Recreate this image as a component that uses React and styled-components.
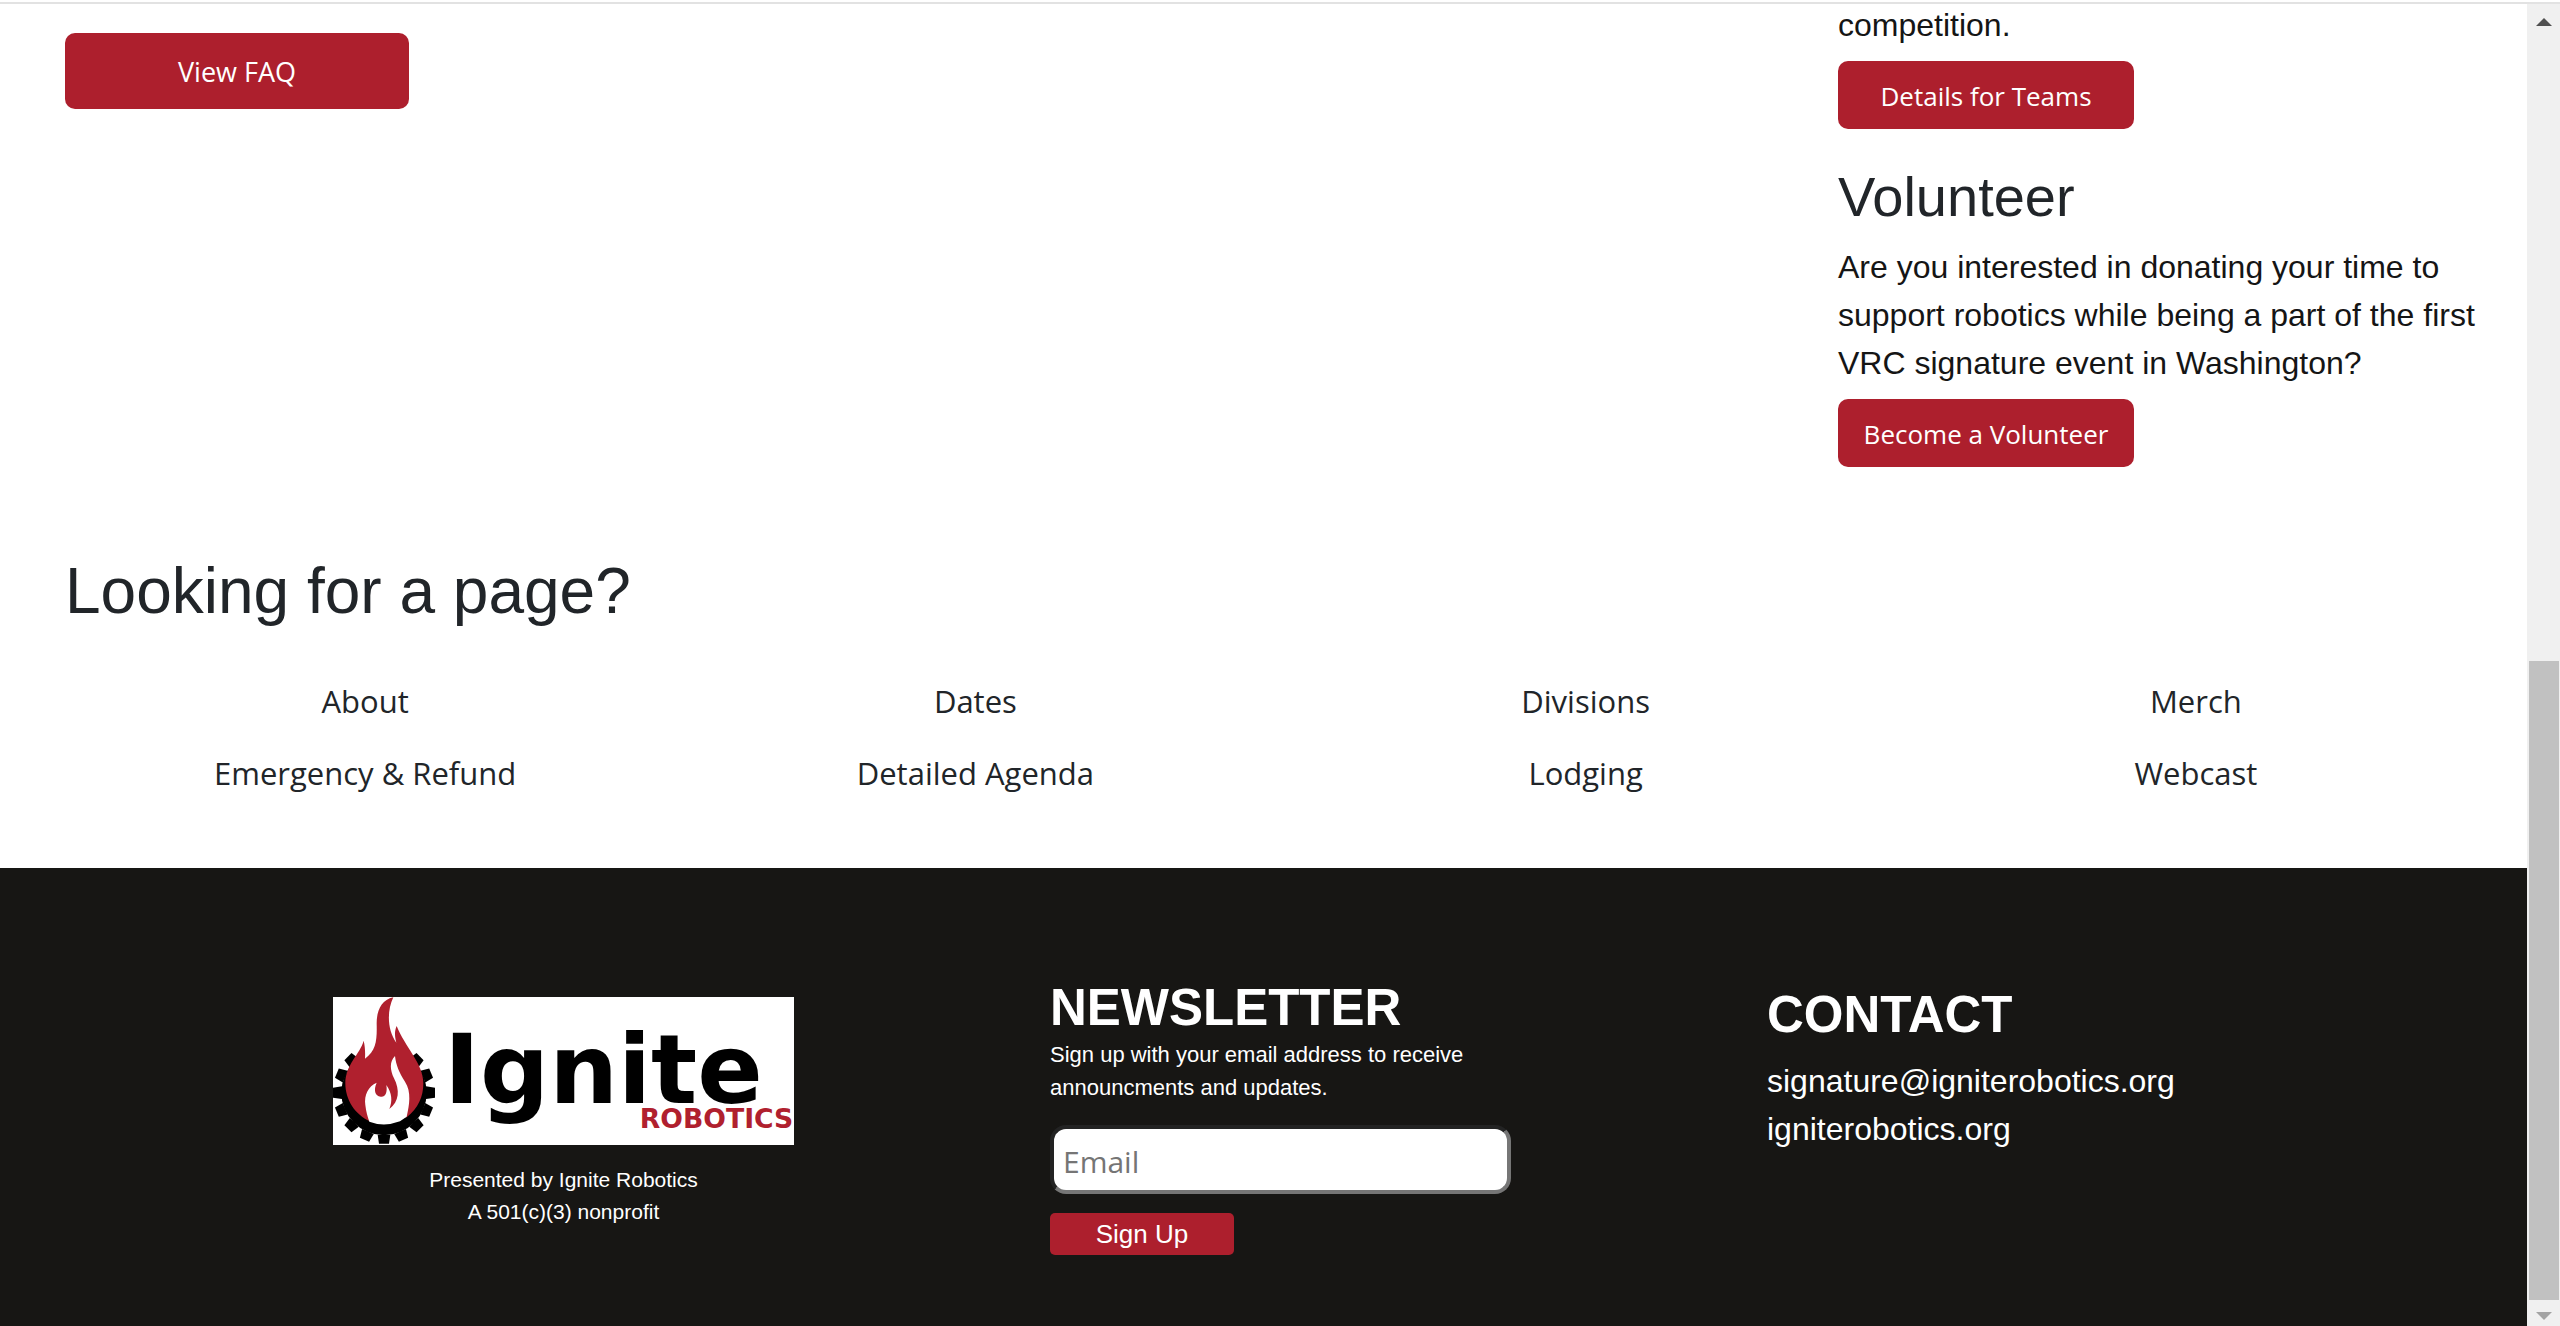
import React from "react";
import styled, { createGlobalStyle } from "styled-components";

const SANS = '"Liberation Sans", Arial, sans-serif';
const UI = '"Open Sans", "Segoe UI", sans-serif';
const RED = "#ad1f2d";

const GlobalStyle = createGlobalStyle`
  *, *::before, *::after { box-sizing: border-box; }
  body { margin: 0; background: #fff; color: #151515; font-family: ${SANS}; }
  h2, h3, p { margin: 0; }
`;

const TopRule = styled.div`
  position: fixed;
  top: 0;
  left: 0;
  right: 0;
  height: 4px;
  background: #fff;
  border-bottom: 2px solid #e2e2e2;
`;

const Shell = styled.div`
  display: grid;
  grid-template-columns: minmax(0, 1fr) 33px;
  min-height: 100vh;
`;

const Page = styled.div`
  display: flex;
  flex-direction: column;
`;

const Intro = styled.section`
  display: grid;
  grid-template-columns: 1fr 660px;
  align-items: start;
  padding: 0 29px 0 65px;
`;

const FaqArea = styled.div`
  padding-top: 33px;
`;

const Aside = styled.aside`
  display: flex;
  flex-direction: column;
  align-items: flex-start;
  gap: 12px;
  padding-top: 1px;
`;

const Text = styled.p`
  font-size: 32px;
  line-height: 48px;
`;

const Subheading = styled.h2`
  margin-top: 22px;
  color: #212529;
  font-size: 56px;
  font-weight: 400;
  line-height: 68px;
`;

const ActionButton = styled.button`
  width: ${(p) => (p.$large ? "344px" : "296px")};
  height: ${(p) => (p.$large ? "76px" : "68px")};
  padding: 2px 0 0;
  border: 0;
  border-radius: 10px;
  background: ${RED};
  color: #fff;
  font: 400 ${(p) => (p.$large ? "27px" : "26px")}/40px ${UI};
`;

const Directory = styled.section`
  padding: 86px 26px 71px 60px;
`;

const DirectoryTitle = styled.h2`
  padding-left: 5px;
  color: #212529;
  font-size: 64px;
  font-weight: 400;
  line-height: 77px;
`;

const LinkGrid = styled.nav`
  display: grid;
  grid-template-columns: repeat(4, 1fr);
  row-gap: 24px;
  margin-top: 47px;
  text-align: center;
`;

const PageLink = styled.a`
  color: #212529;
  font: 400 31px/48px ${UI};
  text-decoration: none;
`;

const Footer = styled.footer`
  flex: 1;
  display: grid;
  grid-template-columns: repeat(3, 1fr);
  align-items: start;
  column-gap: 256px;
  padding: 110px 299px 60px 333px;
  background: #171614;
  color: #fff;
`;

const Brand = styled.div`
  padding-top: 19px;
  text-align: center;
`;

const LogoArt = styled.svg`
  display: block;
  width: 100%;
  background: #fff;
`;

const Caption = styled.p`
  margin-top: 19px;
  font-size: 21px;
  line-height: 32px;
`;

const FooterTitle = styled.h3`
  font-size: 51px;
  font-weight: 700;
  line-height: 60px;
`;

const Form = styled.form`
  display: flex;
  flex-direction: column;
  align-items: flex-start;
`;

const FormNote = styled.label`
  font-size: 22px;
  line-height: 33px;
`;

const EmailInput = styled.input`
  width: 100%;
  height: 69px;
  margin: 21px 0 19px;
  padding: 3px 9px 0;
  border: 4px solid;
  border-color: #232323 #767676 #767676 #232323;
  border-radius: 16px;
  background: #fff;
  font: 400 30px/44px ${UI};
  &::placeholder { color: #757575; opacity: 1; }
`;

const SubmitButton = styled.button`
  width: 184px;
  height: 42px;
  padding: 0;
  border: 0;
  border-radius: 5px;
  background: ${RED};
  color: #fff;
  font: 400 26px/30px ${SANS};
`;

const Contact = styled.address`
  display: flex;
  flex-direction: column;
  align-items: flex-start;
  padding-top: 7px;
  font-style: normal;
`;

const ContactLinks = styled.div`
  display: flex;
  flex-direction: column;
  margin-top: 12px;
`;

const ContactLink = styled.a`
  color: #fff;
  font-size: 32px;
  line-height: 48px;
  text-decoration: none;
`;

const Track = styled.div`
  display: flex;
  flex-direction: column;
  padding: 4px 1px 0 2px;
  background: #f0f0f0;
`;

const ArrowBox = styled.div`
  display: flex;
  justify-content: center;
  align-items: ${(p) => (p.$end ? "flex-end" : "center")};
  height: ${(p) => (p.$end ? "26px" : "36px")};
  padding-bottom: ${(p) => (p.$end ? "6px" : "0")};
`;

const TrackSpace = styled.div`
  flex: 621;
`;

const Thumb = styled.div`
  flex: 639;
  background: #c1c1c1;
`;

const TEETH = Array.from({ length: 16 }, (_, i) => i * 22.5);

function Logo() {
  return (
    <LogoArt viewBox="39 51 1383 444" role="img" aria-label="Ignite Robotics">
      <circle cx="192" cy="338" r="128" />
      {TEETH.map((a) => (
        <path key={a} d="M173 464 L177 491 H207 L211 464 Z" transform={`rotate(${a} 192 338)`} />
      ))}
      <path fill="#fff" d="M192 338 L92 160 H292 Z" />
      <path
        fill="#b0202e"
        d="M220 52 C184 60 170 92 170 130 C171 178 170 212 135 236 C136 214 135 200 131 182 C120 222 76 254 76 310 C76 360 105 404 150 424 L260 412 C295 385 310 350 310 310 C310 250 254 200 230 138 C223 155 224 168 229 188 C202 150 200 94 220 52 Z"
      />
      <path
        fill="#fff"
        d="M225 228 C208 245 210 270 222 295 C240 330 238 365 208 387 C218 362 216 340 199 315 C203 340 195 352 182 350 C165 348 160 330 170 308 C145 318 132 345 136 375 C138 395 143 410 148 425 Q192 442 240 424 L260 410 C268 375 275 335 255 305 C237 277 228 255 225 228 Z"
      />
      <text x="372" y="368" fontFamily="DejaVu Sans" fontWeight="700" fontSize="290">Ignite</text>
      <text x="1420" y="444" textAnchor="end" fill="#b0202e" fontFamily="DejaVu Sans" fontWeight="700" fontSize="80">ROBOTICS</text>
    </LogoArt>
  );
}

const PAGES = [
  "About", "Dates", "Divisions", "Merch",
  "Emergency & Refund", "Detailed Agenda", "Lodging", "Webcast",
];

export default function App() {
  return (
    <>
      <GlobalStyle />
      <Shell>
        <Page>
          <Intro>
            <FaqArea>
              <ActionButton $large>View FAQ</ActionButton>
            </FaqArea>
            <Aside>
              <Text>competition.</Text>
              <ActionButton>Details for Teams</ActionButton>
              <Subheading>Volunteer</Subheading>
              <Text>
                Are you interested in donating your time to support robotics while being a part of the
                first VRC signature event in Washington?
              </Text>
              <ActionButton>Become a Volunteer</ActionButton>
            </Aside>
          </Intro>
          <Directory>
            <DirectoryTitle>Looking for a page?</DirectoryTitle>
            <LinkGrid>
              {PAGES.map((name) => (
                <PageLink key={name} href="#">{name}</PageLink>
              ))}
            </LinkGrid>
          </Directory>
          <Footer>
            <Brand>
              <Logo />
              <Caption>
                Presented by Ignite Robotics
                <br />A 501(c)(3) nonprofit
              </Caption>
            </Brand>
            <Form onSubmit={(e) => e.preventDefault()}>
              <FooterTitle>NEWSLETTER</FooterTitle>
              <FormNote htmlFor="email">
                Sign up with your email address to receive announcments and updates.
              </FormNote>
              <EmailInput id="email" type="email" placeholder="Email" />
              <SubmitButton type="submit">Sign Up</SubmitButton>
            </Form>
            <Contact>
              <FooterTitle>CONTACT</FooterTitle>
              <ContactLinks>
                <ContactLink href="mailto:signature@igniterobotics.org">signature@igniterobotics.org</ContactLink>
                <ContactLink href="#">igniterobotics.org</ContactLink>
              </ContactLinks>
            </Contact>
          </Footer>
        </Page>
        <Track aria-hidden="true">
          <ArrowBox>
            <svg width="16" height="8" viewBox="0 0 16 8"><path d="M8 0 L16 8 H0 Z" fill="#505050" /></svg>
          </ArrowBox>
          <TrackSpace />
          <Thumb />
          <ArrowBox $end>
            <svg width="16" height="8" viewBox="0 0 16 8"><path d="M0 0 H16 L8 8 Z" fill="#a3a3a3" /></svg>
          </ArrowBox>
        </Track>
      </Shell>
      <TopRule />
    </>
  );
}
